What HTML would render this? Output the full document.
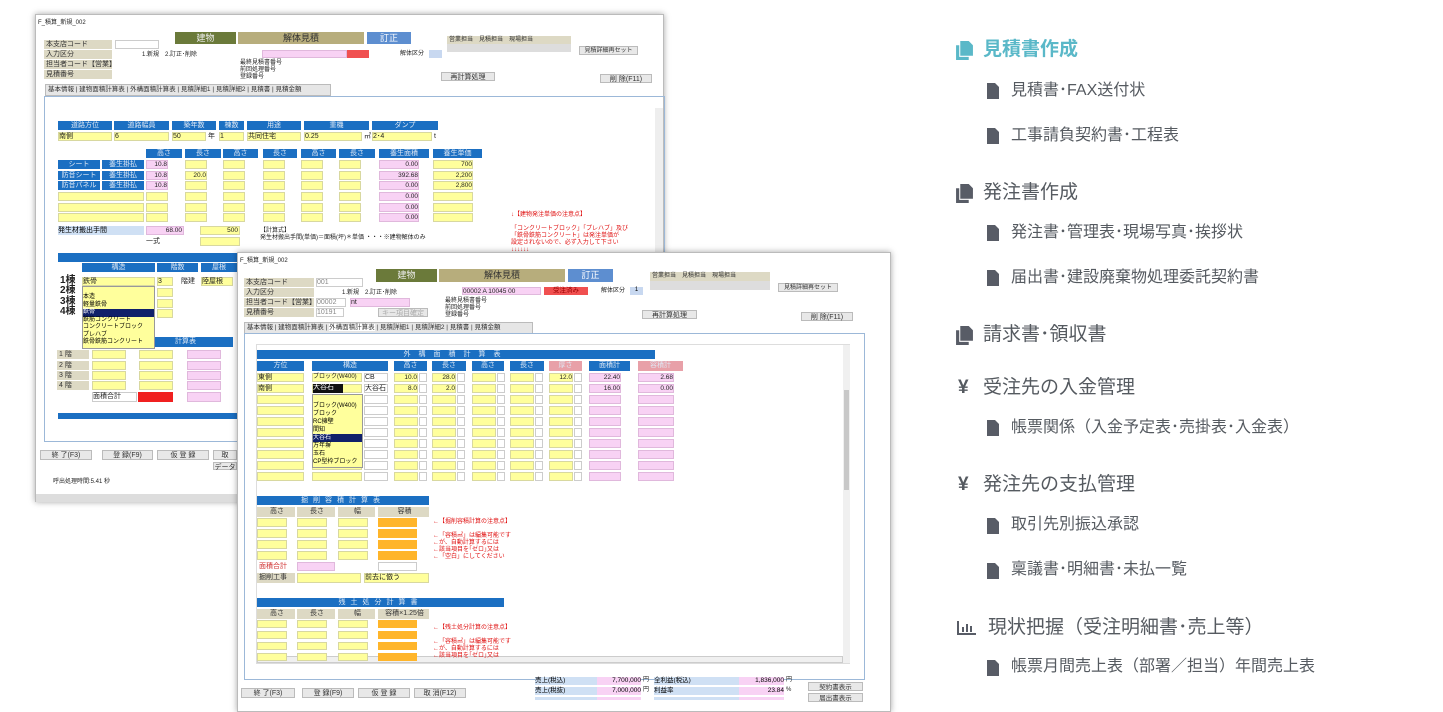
<!DOCTYPE html>
<html><head><meta charset="utf-8"><style>
*{margin:0;padding:0;box-sizing:border-box}
body{width:1443px;height:700px;background:#fff;position:relative;overflow:hidden;font-family:"Liberation Sans","Noto Sans CJK JP",sans-serif}
.a{position:absolute;white-space:nowrap;line-height:1}
.t{font-size:7px;color:#222}
.hb{background:#1b6fc2;color:#dfe9f5;font-size:7px;text-align:center;line-height:9px}
.y{background:#ffff9c;border:1px solid #d8d8a0}
.p{background:#f8d2f4;border:1px solid #e0b8dc}
.o{background:#ffb52a}
.w{background:#fff;border:1px solid #ccc}
.g{background:#ddd9c4;font-size:7px;color:#333;line-height:9px;padding-left:2px}
.bt{background:#e8e8e8;border:1px solid #bbb;font-size:7px;color:#333;text-align:center;line-height:9px}
.win{background:#fff;box-shadow:0 0 6px rgba(0,0,0,.35);border:1px solid #bbb}
.m1{font-size:19px;color:#555a60}
.m2{font-size:16px;color:#555a60}
.red{color:#e01010;font-size:6px;line-height:7px}
.v{font-size:6.5px;line-height:8px;text-align:right;padding-right:1px;color:#222}
</style></head><body>

<!-- window 1 -->
<div class="a win" style="left:35px;top:14px;width:629px;height:488px"></div>
<div class="a" style="left:36px;top:494px;width:627px;height:8px;background:#ddd"></div>
<div class="a t" style="left:38px;top:20px;font-size:6px">F_積算_新規_002</div>
<div class="a" style="left:175px;top:32px;width:61px;height:12px;background:#6b7a3a;color:#eee;font-size:9px;text-align:center;line-height:12px">建物</div>
<div class="a" style="left:238px;top:32px;width:126px;height:12px;background:#b7ad7c;color:#333;font-size:9px;text-align:center;line-height:12px">解体見積</div>
<div class="a" style="left:367px;top:32px;width:44px;height:12px;background:#5d8ed0;color:#fff;font-size:9px;text-align:center;line-height:12px">訂正</div>
<div class="a g" style="left:447px;top:36px;width:124px;height:8px;font-size:6px;line-height:8px">営業担当　見積担当　現場担当</div>
<div class="a" style="left:447px;top:44px;width:124px;height:8px;background:#ddd"></div>
<div class="a bt" style="left:579px;top:46px;width:59px;height:9px;font-size:6px">見積詳細再セット</div>
<div class="a g" style="left:44px;top:40px;width:68px;height:9px">本支店コード</div>
<div class="a g" style="left:44px;top:50px;width:68px;height:9px">入力区分</div>
<div class="a g" style="left:44px;top:60px;width:68px;height:9px">担当者コード【営業】</div>
<div class="a g" style="left:44px;top:70px;width:68px;height:9px">見積番号</div>
<div class="a w" style="left:115px;top:40px;width:44px;height:9px"></div>
<div class="a t" style="left:142px;top:52px;font-size:6px">1.新規　2.訂正･削除</div>
<div class="a p" style="left:262px;top:50px;width:85px;height:8px"></div>
<div class="a" style="left:347px;top:50px;width:22px;height:8px;background:#f05050"></div>
<div class="a t" style="left:240px;top:60px;font-size:6px;line-height:7px">最終見積書番号<br>前回処理番号<br>登録番号</div>
<div class="a t" style="left:400px;top:51px;font-size:6px">解体区分</div>
<div class="a" style="left:429px;top:50px;width:13px;height:8px;background:#c8d8f0"></div>
<div class="a bt" style="left:441px;top:72px;width:54px;height:9px">再計算処理</div>
<div class="a bt" style="left:600px;top:74px;width:52px;height:9px">削 除(F11)</div>
<div class="a" style="left:45px;top:84px;width:286px;height:12px;background:#e6e6e6;border:1px solid #bbb;font-size:6.5px;color:#333;line-height:10px;padding-left:2px">基本情報 | 建物面積計算表 | 外構面積計算表 | 見積詳細1 | 見積詳細2 | 見積書 | 見積金額</div>
<div class="a" style="left:44px;top:96px;width:621px;height:346px;border:1px solid #9cb8d8"></div>
<div class="a" style="left:655px;top:108px;width:8px;height:150px;background:#eee"></div>

<div class="a hb" style="left:58px;top:121px;width:54px;height:9px">道路方位</div>
<div class="a hb" style="left:114px;top:121px;width:55px;height:9px">道路幅員</div>
<div class="a hb" style="left:172px;top:121px;width:44px;height:9px">築年数</div>
<div class="a hb" style="left:219px;top:121px;width:25px;height:9px">棟数</div>
<div class="a hb" style="left:247px;top:121px;width:54px;height:9px">用途</div>
<div class="a hb" style="left:304px;top:121px;width:65px;height:9px">重機</div>
<div class="a hb" style="left:372px;top:121px;width:66px;height:9px">ダンプ</div>
<div class="a y t" style="left:58px;top:132px;width:54px;height:9px">南側</div>
<div class="a y t" style="left:114px;top:132px;width:55px;height:9px">6</div>
<div class="a y t" style="left:172px;top:132px;width:34px;height:9px">50</div>
<div class="a t" style="left:208px;top:133px">年</div>
<div class="a y t" style="left:219px;top:132px;width:25px;height:9px">1</div>
<div class="a y t" style="left:247px;top:132px;width:54px;height:9px">共同住宅</div>
<div class="a y t" style="left:304px;top:132px;width:58px;height:9px">0.25</div>
<div class="a t" style="left:364px;top:133px">㎥</div>
<div class="a y t" style="left:372px;top:132px;width:60px;height:9px">2･4</div>
<div class="a t" style="left:434px;top:133px">t</div>
<div class="a hb" style="left:146px;top:149px;width:36px;height:9px">高さ</div>
<div class="a hb" style="left:185px;top:149px;width:36px;height:9px">長さ</div>
<div class="a hb" style="left:223px;top:149px;width:35px;height:9px">高さ</div>
<div class="a hb" style="left:263px;top:149px;width:34px;height:9px">長さ</div>
<div class="a hb" style="left:301px;top:149px;width:35px;height:9px">高さ</div>
<div class="a hb" style="left:339px;top:149px;width:36px;height:9px">長さ</div>
<div class="a hb" style="left:379px;top:149px;width:50px;height:9px">養生面積</div>
<div class="a hb" style="left:433px;top:149px;width:49px;height:9px">養生単価</div>
<div id="w1g"></div>
<div class="a hb" style="left:58px;top:160px;width:42px;height:9px">シート</div>
<div class="a hb" style="left:102px;top:160px;width:42px;height:9px">養生掛払</div>
<div class="a hb" style="left:58px;top:171px;width:42px;height:9px">防音シート</div>
<div class="a hb" style="left:102px;top:171px;width:42px;height:9px">養生掛払</div>
<div class="a hb" style="left:58px;top:181px;width:42px;height:9px">防音パネル</div>
<div class="a hb" style="left:102px;top:181px;width:42px;height:9px">養生掛払</div>
<div class="a v" style="left:146px;top:161px;width:22px">10.8</div>
<div class="a v" style="left:146px;top:172px;width:22px">10.8</div>
<div class="a v" style="left:146px;top:182px;width:22px">10.8</div>
<div class="a v" style="left:185px;top:172px;width:22px">20.0</div>
<div class="a v" style="left:379px;top:161px;width:40px">0.00</div>
<div class="a v" style="left:379px;top:172px;width:40px">392.68</div>
<div class="a v" style="left:379px;top:182px;width:40px">0.00</div>
<div class="a v" style="left:379px;top:193px;width:40px">0.00</div>
<div class="a v" style="left:379px;top:204px;width:40px">0.00</div>
<div class="a v" style="left:379px;top:214px;width:40px">0.00</div>
<div class="a v" style="left:433px;top:161px;width:40px">700</div>
<div class="a v" style="left:433px;top:172px;width:40px">2,200</div>
<div class="a v" style="left:433px;top:182px;width:40px">2,800</div>
<div class="a" style="left:58px;top:226px;width:86px;height:9px;background:#cfe0f4;font-size:7px;line-height:9px">発生材搬出手間</div>
<div class="a p v" style="left:146px;top:226px;width:38px;height:9px">68.00</div>
<div class="a y v" style="left:200px;top:226px;width:40px;height:9px">500</div>
<div class="a y" style="left:200px;top:237px;width:40px;height:9px"></div>
<div class="a t" style="left:146px;top:238px">一式</div>
<div class="a t" style="left:260px;top:228px;font-size:6px;line-height:7px">【計算式】<br>発生材搬出手間(単価)＝面積(坪)＊単価 ・・・※建物解体のみ</div>
<div class="a red" style="left:511px;top:212px">↓【建物発注単価の注意点】<br><br>「コンクリートブロック」「プレハブ」及び<br>「鉄骨鉄筋コンクリート」は発注単価が<br>設定されないので、必ず入力して下さい<br>↓↓↓↓↓↓</div>
<div class="a" style="left:58px;top:253px;width:180px;height:9px;background:#1b6fc2"></div>
<div class="a hb" style="left:82px;top:263px;width:73px;height:9px">構造</div>
<div class="a hb" style="left:157px;top:263px;width:41px;height:9px">階数</div>
<div class="a hb" style="left:201px;top:263px;width:36px;height:9px">屋根</div>
<div class="a" style="left:60px;top:276px;font-size:10px;line-height:10.3px;font-weight:bold;color:#222">1棟<br>2棟<br>3棟<br>4棟</div>
<div class="a y t" style="left:82px;top:277px;width:73px;height:9px">鉄骨</div>
<div class="a y t" style="left:157px;top:277px;width:16px;height:9px">3</div>
<div class="a t" style="left:181px;top:278px">階建</div>
<div class="a y t" style="left:201px;top:277px;width:32px;height:9px">陸屋根</div>
<div class="a" style="left:82px;top:286px;width:73px;height:63px;background:#ffff9c;border:1px solid #999;font-size:6px;line-height:7.5px;padding-top:7px">本造<br>軽量鉄骨<br><span style="background:#10206a;color:#fff;display:block">鉄骨</span>鉄筋コンクリート<br>コンクリートブロック<br>プレハブ<br>鉄骨鉄筋コンクリート</div>
<div class="a" style="left:155px;top:337px;width:78px;height:10px;background:#1b6fc2;color:#dfe9f5;font-size:7px;line-height:10px;padding-left:20px">計算表</div>
<div class="a g" style="left:57px;top:350px;width:32px;height:9px">1 階</div>
<div class="a g" style="left:57px;top:361px;width:32px;height:9px">2 階</div>
<div class="a g" style="left:57px;top:371px;width:32px;height:9px">3 階</div>
<div class="a g" style="left:57px;top:381px;width:32px;height:9px">4 階</div>
<div class="a w t" style="left:92px;top:392px;width:45px;height:10px">面積合計</div>
<div class="a" style="left:138px;top:392px;width:35px;height:10px;background:#f02020"></div>
<div class="a" style="left:58px;top:413px;width:180px;height:6px;background:#1b6fc2"></div>
<div class="a bt" style="left:40px;top:450px;width:52px;height:10px">終 了(F3)</div>
<div class="a bt" style="left:102px;top:450px;width:51px;height:10px">登 録(F9)</div>
<div class="a bt" style="left:157px;top:450px;width:52px;height:10px">仮 登 録</div>
<div class="a bt" style="left:213px;top:450px;width:24px;height:10px">取</div>
<div class="a bt" style="left:213px;top:462px;width:24px;height:8px">データ</div>
<div class="a t" style="left:53px;top:479px;font-size:6px">呼出処理時間:5.41 秒</div>

<!-- window 2 -->
<div class="a win" style="left:237px;top:252px;width:654px;height:460px"></div>
<div class="a t" style="left:240px;top:258px;font-size:6px">F_積算_新規_002</div>
<div class="a" style="left:376px;top:269px;width:61px;height:13px;background:#6b7a3a;color:#eee;font-size:9px;text-align:center;line-height:13px">建物</div>
<div class="a" style="left:439px;top:269px;width:126px;height:13px;background:#b7ad7c;color:#333;font-size:9px;text-align:center;line-height:13px">解体見積</div>
<div class="a" style="left:568px;top:269px;width:45px;height:13px;background:#5d8ed0;color:#fff;font-size:9px;text-align:center;line-height:13px">訂正</div>
<div class="a g" style="left:650px;top:272px;width:120px;height:9px;font-size:6px">営業担当　見積担当　現場担当</div>
<div class="a" style="left:650px;top:281px;width:120px;height:9px;background:#ddd"></div>
<div class="a bt" style="left:778px;top:283px;width:60px;height:9px;font-size:6px">見積詳細再セット</div>
<div class="a g" style="left:244px;top:278px;width:70px;height:9px">本支店コード</div>
<div class="a g" style="left:244px;top:288px;width:70px;height:9px">入力区分</div>
<div class="a g" style="left:244px;top:298px;width:70px;height:9px">担当者コード【営業】</div>
<div class="a g" style="left:244px;top:308px;width:70px;height:9px">見積番号</div>
<div class="a w t" style="left:316px;top:278px;width:47px;height:9px;color:#888">001</div>
<div class="a t" style="left:342px;top:290px;font-size:6px">1.新規　2.訂正･削除</div>
<div class="a w t" style="left:316px;top:298px;width:30px;height:9px;color:#888">00002</div>
<div class="a p t" style="left:350px;top:298px;width:60px;height:9px">nt</div>
<div class="a w t" style="left:316px;top:308px;width:28px;height:9px;color:#888">10191</div>
<div class="a bt" style="left:378px;top:308px;width:50px;height:9px;color:#aaa">キー項目確定</div>
<div class="a p t" style="left:462px;top:287px;width:79px;height:8px;font-size:6.5px;line-height:7px">00002 A 10045 00</div>
<div class="a" style="left:544px;top:287px;width:44px;height:8px;background:#f05050;color:#900;font-size:6.5px;text-align:center;line-height:8px">受注済み</div>
<div class="a t" style="left:601px;top:288px;font-size:6px">解体区分</div>
<div class="a" style="left:630px;top:287px;width:13px;height:8px;background:#c8d8f0;font-size:6px;text-align:center">1</div>
<div class="a t" style="left:445px;top:298px;font-size:6px;line-height:7px">最終見積書番号<br>前回処理番号<br>登録番号</div>
<div class="a bt" style="left:642px;top:310px;width:55px;height:9px">再計算処理</div>
<div class="a bt" style="left:801px;top:312px;width:52px;height:9px">削 除(F11)</div>
<div class="a" style="left:244px;top:322px;width:289px;height:12px;background:#e6e6e6;border:1px solid #bbb;font-size:6.5px;color:#333;line-height:10px;padding-left:2px">基本情報 | 建物面積計算表 | <span style="background:#fff">外構面積計算表</span> | 見積詳細1 | 見積詳細2 | 見積書 | 見積金額</div>
<div class="a" style="left:244px;top:333px;width:621px;height:347px;border:1px solid #9cb8d8"></div>
<div class="a" style="left:256px;top:344px;width:594px;height:320px;border:1px solid #ddd"></div>
<div class="a" style="left:843px;top:345px;width:7px;height:318px;background:#f0f0f0"></div>
<div class="a" style="left:844px;top:390px;width:5px;height:100px;background:#c8c8c8"></div>
<div class="a" style="left:257px;top:656px;width:586px;height:7px;background:#f0f0f0;border:1px solid #ccc"></div>

<div class="a hb" style="left:257px;top:350px;width:398px;height:9px;letter-spacing:8px">外構面積計算表</div>
<div class="a hb" style="left:257px;top:361px;width:47px;height:10px">方位</div>
<div class="a hb" style="left:312px;top:361px;width:76px;height:10px">構造</div>
<div class="a hb" style="left:394px;top:361px;width:33px;height:10px">高さ</div>
<div class="a hb" style="left:432px;top:361px;width:34px;height:10px">長さ</div>
<div class="a hb" style="left:472px;top:361px;width:32px;height:10px">高さ</div>
<div class="a hb" style="left:510px;top:361px;width:34px;height:10px">長さ</div>
<div class="a hb" style="left:549px;top:361px;width:33px;height:10px;background:#e8a0a8">厚さ</div>
<div class="a hb" style="left:589px;top:361px;width:41px;height:10px">面積計</div>
<div class="a hb" style="left:638px;top:361px;width:45px;height:10px;background:#e8a0a8">容積計</div>
<div id="w2g"></div>
<div class="a t" style="left:258px;top:374px">東側</div>
<div class="a t" style="left:258px;top:385px">南側</div>
<div class="a t" style="left:313px;top:374px;font-size:6px">ブロック(W400)</div>
<div class="a t" style="left:365px;top:374px">CB</div>
<div class="a" style="left:313px;top:384px;width:30px;height:9px;background:#111;color:#fff;font-size:7px">大谷石</div>
<div class="a t" style="left:365px;top:385px">大谷石</div>
<div class="a v" style="left:394px;top:374px;width:24px">10.0</div>
<div class="a v" style="left:394px;top:385px;width:24px">8.0</div>
<div class="a v" style="left:432px;top:374px;width:24px">28.0</div>
<div class="a v" style="left:432px;top:385px;width:24px">2.0</div>
<div class="a v" style="left:549px;top:374px;width:24px">12.0</div>
<div class="a v" style="left:589px;top:374px;width:32px">22.40</div>
<div class="a v" style="left:589px;top:385px;width:32px">16.00</div>
<div class="a v" style="left:638px;top:374px;width:36px">2.68</div>
<div class="a v" style="left:638px;top:385px;width:36px">0.00</div>
<div class="a" style="left:312px;top:394px;width:51px;height:74px;background:#ffff9c;border:1px solid #999;font-size:6px;line-height:8px;padding-top:7px">ブロック(W400)<br>ブロック<br>RC擁壁<br>間知<br><span style="background:#10206a;color:#fff;display:block">大谷石</span>万年塀<br>玉石<br>CP型枠ブロック</div>

<div class="a hb" style="left:257px;top:496px;width:172px;height:9px;letter-spacing:5px">掘削容積計算表</div>
<div class="a g" style="left:257px;top:507px;width:38px;height:10px;text-align:center">高さ</div>
<div class="a g" style="left:297px;top:507px;width:38px;height:10px;text-align:center">長さ</div>
<div class="a g" style="left:338px;top:507px;width:37px;height:10px;text-align:center">幅</div>
<div class="a g" style="left:378px;top:507px;width:51px;height:10px;text-align:center">容積</div>
<div class="a red" style="left:433px;top:519px">←【掘削容積計算の注意点】<br><br>←「容積㎥」は編集可能です<br>←が、自動計算するには<br>←該当項目を｢ゼロ｣又は<br>←「空白」にしてください</div>
<div class="a t" style="left:259px;top:563px;color:#d03030">面積合計</div>
<div class="a g" style="left:257px;top:573px;width:38px;height:10px">掘削工事</div>
<div class="a y t" style="left:297px;top:573px;width:64px;height:10px"></div>
<div class="a y t" style="left:364px;top:573px;width:65px;height:10px">前去に倣う</div>
<div class="a hb" style="left:257px;top:598px;width:247px;height:9px;letter-spacing:5px">残土処分計算書</div>
<div class="a g" style="left:257px;top:609px;width:38px;height:10px;text-align:center">高さ</div>
<div class="a g" style="left:297px;top:609px;width:38px;height:10px;text-align:center">長さ</div>
<div class="a g" style="left:338px;top:609px;width:37px;height:10px;text-align:center">幅</div>
<div class="a g" style="left:378px;top:609px;width:51px;height:10px;text-align:center">容積×1.25倍</div>
<div class="a red" style="left:433px;top:625px">←【残土処分計算の注意点】<br><br>←「容積㎥」は編集可能です<br>←が、自動計算するには<br>←該当項目を｢ゼロ｣又は</div>

<div class="a bt" style="left:241px;top:688px;width:54px;height:10px">終 了(F3)</div>
<div class="a bt" style="left:302px;top:688px;width:52px;height:10px">登 録(F9)</div>
<div class="a bt" style="left:358px;top:688px;width:52px;height:10px">仮 登 録</div>
<div class="a bt" style="left:414px;top:688px;width:52px;height:10px">取 消(F12)</div>
<div class="a" style="left:535px;top:677px;width:62px;height:8px;background:#cfe0f4;font-size:6.5px;line-height:8px">売上(税込)</div>
<div class="a" style="left:597px;top:677px;width:44px;height:8px;background:#f8d2f4;font-size:6.5px;line-height:8px;text-align:right">7,700,000</div>
<div class="a t" style="left:643px;top:677px;font-size:6px">円</div>
<div class="a" style="left:654px;top:677px;width:85px;height:8px;background:#cfe0f4;font-size:6.5px;line-height:8px">全利益(税込)</div>
<div class="a" style="left:739px;top:677px;width:45px;height:8px;background:#f8d2f4;font-size:6.5px;line-height:8px;text-align:right">1,836,000</div>
<div class="a t" style="left:786px;top:677px;font-size:6px">円</div>
<div class="a" style="left:535px;top:687px;width:62px;height:8px;background:#cfe0f4;font-size:6.5px;line-height:8px">売上(税抜)</div>
<div class="a" style="left:597px;top:687px;width:44px;height:8px;background:#f8d2f4;font-size:6.5px;line-height:8px;text-align:right">7,000,000</div>
<div class="a t" style="left:643px;top:687px;font-size:6px">円</div>
<div class="a" style="left:654px;top:687px;width:85px;height:8px;background:#cfe0f4;font-size:6.5px;line-height:8px">利益率</div>
<div class="a" style="left:739px;top:687px;width:45px;height:8px;background:#f8d2f4;font-size:6.5px;line-height:8px;text-align:right">23.84</div>
<div class="a t" style="left:786px;top:687px;font-size:6px">%</div>
<div class="a" style="left:535px;top:697px;width:62px;height:3px;background:#cfe0f4"></div>
<div class="a" style="left:597px;top:697px;width:44px;height:3px;background:#f8d2f4"></div>
<div class="a" style="left:654px;top:697px;width:85px;height:3px;background:#cfe0f4"></div>
<div class="a" style="left:739px;top:697px;width:45px;height:3px;background:#f8d2f4"></div>
<div class="a bt" style="left:808px;top:682px;width:55px;height:9px;font-size:6.5px">契約書表示</div>
<div class="a bt" style="left:808px;top:693px;width:55px;height:9px;font-size:6.5px">届出書表示</div>

<!-- right menu -->
<svg width="0" height="0" style="position:absolute"><defs>
<symbol id="doc" viewBox="0 0 12 16"><path d="M0 0H8L12 4V16H0Z" fill="currentColor"/></symbol>
<symbol id="docs" viewBox="0 0 16 18"><path d="M0 4H3V15H12V18H0Z" fill="currentColor"/><path d="M4 0H12L16 4V14H4Z" fill="currentColor"/></symbol>
</defs></svg>
<svg class="a" style="left:956px;top:41px;color:#5ab8c8" width="17" height="19"><use href="#docs"/></svg>
<div class="a m1" style="left:983px;top:40px;color:#5ab8c8;font-weight:bold">見積書作成</div>
<svg class="a" style="left:987px;top:83px;color:#585c66" width="12" height="16"><use href="#doc"/></svg>
<div class="a m2" style="left:1011px;top:83px">見積書･FAX送付状</div>
<svg class="a" style="left:987px;top:128px;color:#585c66" width="12" height="16"><use href="#doc"/></svg>
<div class="a m2" style="left:1011px;top:128px">工事請負契約書･工程表</div>
<svg class="a" style="left:956px;top:184px;color:#585c66" width="17" height="19"><use href="#docs"/></svg>
<div class="a m1" style="left:983px;top:183px">発注書作成</div>
<svg class="a" style="left:987px;top:225px;color:#585c66" width="12" height="16"><use href="#doc"/></svg>
<div class="a m2" style="left:1011px;top:225px">発注書･管理表･現場写真･挨拶状</div>
<svg class="a" style="left:987px;top:270px;color:#585c66" width="12" height="16"><use href="#doc"/></svg>
<div class="a m2" style="left:1011px;top:270px">届出書･建設廃棄物処理委託契約書</div>
<svg class="a" style="left:956px;top:326px;color:#585c66" width="17" height="19"><use href="#docs"/></svg>
<div class="a m1" style="left:983px;top:325px">請求書･領収書</div>
<div class="a m1" style="left:958px;top:378px;font-weight:bold">¥</div>
<div class="a m1" style="left:983px;top:378px">受注先の入金管理</div>
<svg class="a" style="left:987px;top:420px;color:#585c66" width="12" height="16"><use href="#doc"/></svg>
<div class="a m2" style="left:1011px;top:420px">帳票関係（入金予定表･売掛表･入金表）</div>
<div class="a m1" style="left:958px;top:475px;font-weight:bold">¥</div>
<div class="a m1" style="left:983px;top:475px">発注先の支払管理</div>
<svg class="a" style="left:987px;top:518px;color:#585c66" width="12" height="16"><use href="#doc"/></svg>
<div class="a m2" style="left:1011px;top:517px">取引先別振込承認</div>
<svg class="a" style="left:987px;top:563px;color:#585c66" width="12" height="16"><use href="#doc"/></svg>
<div class="a m2" style="left:1011px;top:562px">稟議書･明細書･未払一覧</div>
<svg class="a" style="left:957px;top:620px" width="19" height="15"><path d="M1 1V14H19" stroke="#585c66" stroke-width="2" fill="none"/><rect x="5" y="7" width="2" height="5" fill="#585c66"/><rect x="9" y="4" width="2" height="8" fill="#585c66"/><rect x="13" y="6" width="2" height="6" fill="#585c66"/></svg>
<div class="a m1" style="left:988px;top:618px">現状把握（受注明細書･売上等）</div>
<svg class="a" style="left:987px;top:660px;color:#585c66" width="12" height="16"><use href="#doc"/></svg>
<div class="a m2" style="left:1011px;top:659px">帳票月間売上表（部署／担当）年間売上表</div>

<script>
function b(p,x,y,w,h,c){var d=document.createElement('div');d.className='a '+c;d.style.cssText='left:'+x+'px;top:'+y+'px;width:'+w+'px;height:'+h+'px';document.getElementById(p).appendChild(d);}
var ry=[160,171,181,192,203,213];
ry.forEach(function(y,i){
 if(i>=3)b('w1g',58,y,86,9,'y');
 b('w1g',146,y,22,9,i<3?'p':'y');
 [185,223,263,301,339].forEach(function(x){b('w1g',x,y,22,9,'y');});
 b('w1g',379,y,40,9,'p');b('w1g',433,y,40,9,'y');
});
[350,361,371,381].forEach(function(y){b('w1g',92,y,34,9,'y');b('w1g',139,y,34,9,'y');b('w1g',187,y,34,9,'p');});
b('w1g',187,392,34,10,'p');
[288,299,309].forEach(function(y){b('w1g',157,y,16,9,'y');});
for(var i=0;i<10;i++){var y=373+i*11;
 b('w2g',257,y,47,9,'y');b('w2g',312,y,50,9,'y');b('w2g',364,y,24,9,'w');
 [394,432,472,510,549].forEach(function(x){b('w2g',x,y,24,9,'y');b('w2g',x+25,y,8,9,'w');});
 b('w2g',589,y,32,9,'p');b('w2g',638,y,36,9,'p');}
[518,529,540,551].forEach(function(y){b('w2g',257,y,30,9,'y');b('w2g',297,y,30,9,'y');b('w2g',338,y,30,9,'y');b('w2g',378,y,39,9,'o');});
b('w2g',297,562,38,9,'p');b('w2g',378,562,39,9,'w');
[620,631,642,653].forEach(function(y){b('w2g',257,y,30,8,'y');b('w2g',297,y,30,8,'y');b('w2g',338,y,30,8,'y');b('w2g',378,y,39,8,'o');});
</script>
</body></html>
